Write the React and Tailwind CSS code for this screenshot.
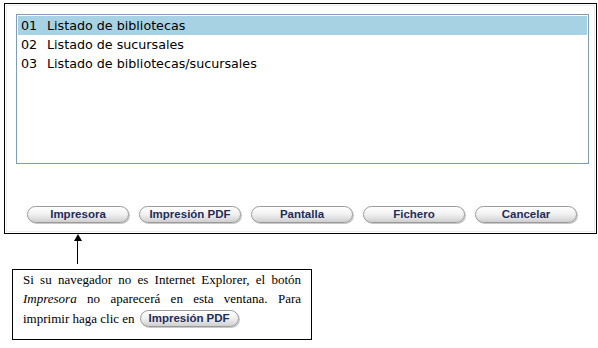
const items = [
  { code: "01", name: "Listado de bibliotecas" },
  { code: "02", name: "Listado de sucursales" },
  { code: "03", name: "Listado de bibliotecas/sucursales" },
];

const buttons = ["Impresora", "Impresión PDF", "Pantalla", "Fichero", "Cancelar"];

function PillButton({ label, className = "" }) {
  return (
    <button
      className={
        "rounded-full border border-[#9a9a9a] bg-gradient-to-b from-[#ffffff] via-[#f0f0f0] to-[#cfcfcf] text-[11.5px] font-bold leading-none text-[#1e2d5a] shadow-[1px_1px_0_#c8c8c8] " +
        className
      }
      style={{ fontFamily: "'Liberation Sans', Arial, sans-serif" }}
    >
      {label}
    </button>
  );
}

export default function App() {
  return (
    <div className="w-[598px] h-[348px] bg-white pt-[3px] pl-[4px]">
      {/* ventana principal */}
      <div className="w-[593px] h-[231px] border border-black p-px">
        <div className="h-full border border-[#ececec] pt-[8px] px-[9px]">
          <div
            className="h-[150px] w-[573px] border border-[#7f9db9] bg-white p-px text-[12.7px] text-black"
            style={{ fontFamily: "Tahoma, 'DejaVu Sans', sans-serif" }}
          >
            {items.map((it, i) => (
              <div
                key={it.code}
                className={
                  "flex h-[19px] items-center pl-[3px] " +
                  (i === 0 ? "bg-[#a6d2e3]" : "")
                }
              >
                <span className="w-[26px]">{it.code}</span>
                <span>{it.name}</span>
              </div>
            ))}
          </div>

          <div className="mt-[42px] flex gap-[10px] pl-[11px]">
            {buttons.map((b) => (
              <PillButton key={b} label={b} className="h-[17px] w-[102px]" />
            ))}
          </div>
        </div>
      </div>

      {/* flecha */}
      <div className="ml-[70px] flex w-[7px] flex-col items-center">
        <div className="h-0 w-0 border-x-[4px] border-b-[7px] border-x-transparent border-b-black" />
        <div className="h-[23px] w-px bg-black" />
      </div>

      {/* nota */}
      <div
        className="ml-[8px] mt-[5px] h-[71px] w-[300px] border border-black px-[10px] pt-0 text-[13px] leading-[19px] text-black"
        style={{ fontFamily: "'Liberation Serif', 'Times New Roman', serif" }}
      >
        <p className="text-justify [text-align-last:justify]">
          Si su navegador no es Internet Explorer, el botón <i>Impresora</i> no
          aparecerá en esta ventana. Para
        </p>
        <p className="mt-px flex items-center gap-[5px]">
          <span>imprimir haga clic en</span>
          <PillButton label="Impresión PDF" className="h-[17px] w-[99px]" />
        </p>
      </div>
    </div>
  );
}
